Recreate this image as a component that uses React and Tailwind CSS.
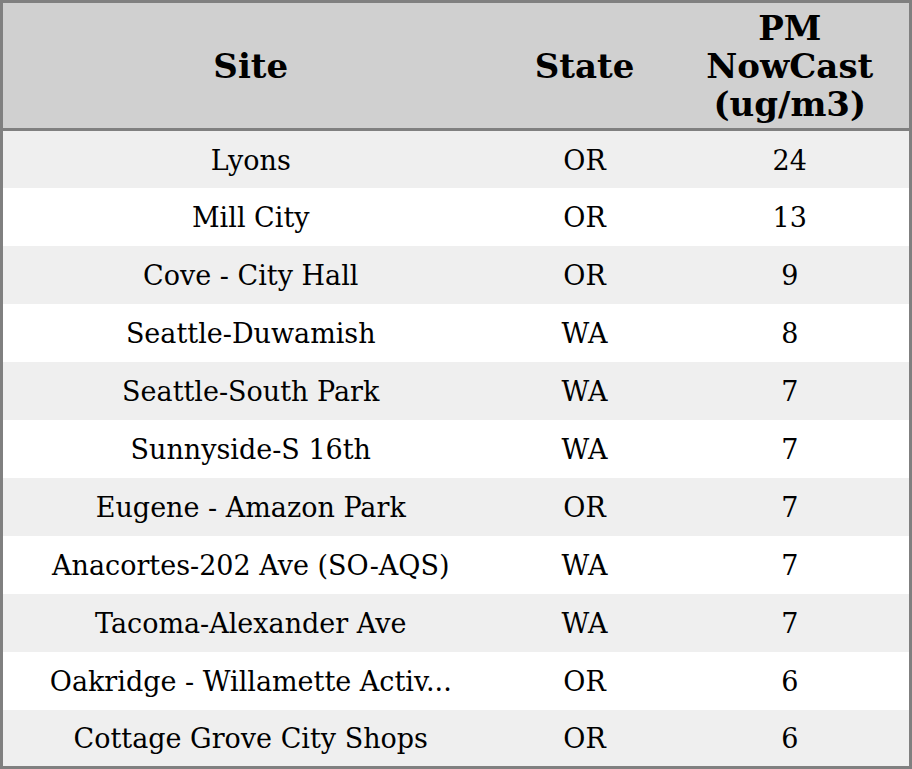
const rows = [
  ["Lyons", "OR", "24"],
  ["Mill City", "OR", "13"],
  ["Cove - City Hall", "OR", "9"],
  ["Seattle-Duwamish", "WA", "8"],
  ["Seattle-South Park", "WA", "7"],
  ["Sunnyside-S 16th", "WA", "7"],
  ["Eugene - Amazon Park", "OR", "7"],
  ["Anacortes-202 Ave (SO-AQS)", "WA", "7"],
  ["Tacoma-Alexander Ave", "WA", "7"],
  ["Oakridge - Willamette Activ...", "OR", "6"],
  ["Cottage Grove City Shops", "OR", "6"],
];

export default function App() {
  return (
    <div className="w-[912px] h-[769px] bg-white font-['DejaVu_Serif',serif] text-black">
      <table className="w-full h-full border-[3px] border-[#808080] border-collapse table-fixed">
        <colgroup>
          <col className="w-[497px]" />
          <col className="w-[172px]" />
          <col />
        </colgroup>
        <thead>
          <tr className="h-[128px] bg-[#d0d0d0] border-b-[3px] border-[#808080]">
            <th className="text-[34px] font-bold leading-[38px] text-center align-middle">Site</th>
            <th className="text-[34px] font-bold leading-[38px] text-center align-middle">State</th>
            <th className="text-[34px] font-bold leading-[38px] text-center align-middle">
              PM
              <br />
              NowCast
              <br />
              (ug/m3)
            </th>
          </tr>
        </thead>
        <tbody>
          {rows.map((r, i) => (
            <tr key={i} className={i % 2 === 0 ? "h-[57.7px] bg-[#efefef]" : "h-[57.7px] bg-white"}>
              <td className="pt-[3px] text-[27px] leading-[32px] text-center align-middle">{r[0]}</td>
              <td className="pt-[3px] text-[27px] leading-[32px] text-center align-middle">{r[1]}</td>
              <td className="pt-[3px] text-[27px] leading-[32px] text-center align-middle">{r[2]}</td>
            </tr>
          ))}
        </tbody>
      </table>
    </div>
  );
}
